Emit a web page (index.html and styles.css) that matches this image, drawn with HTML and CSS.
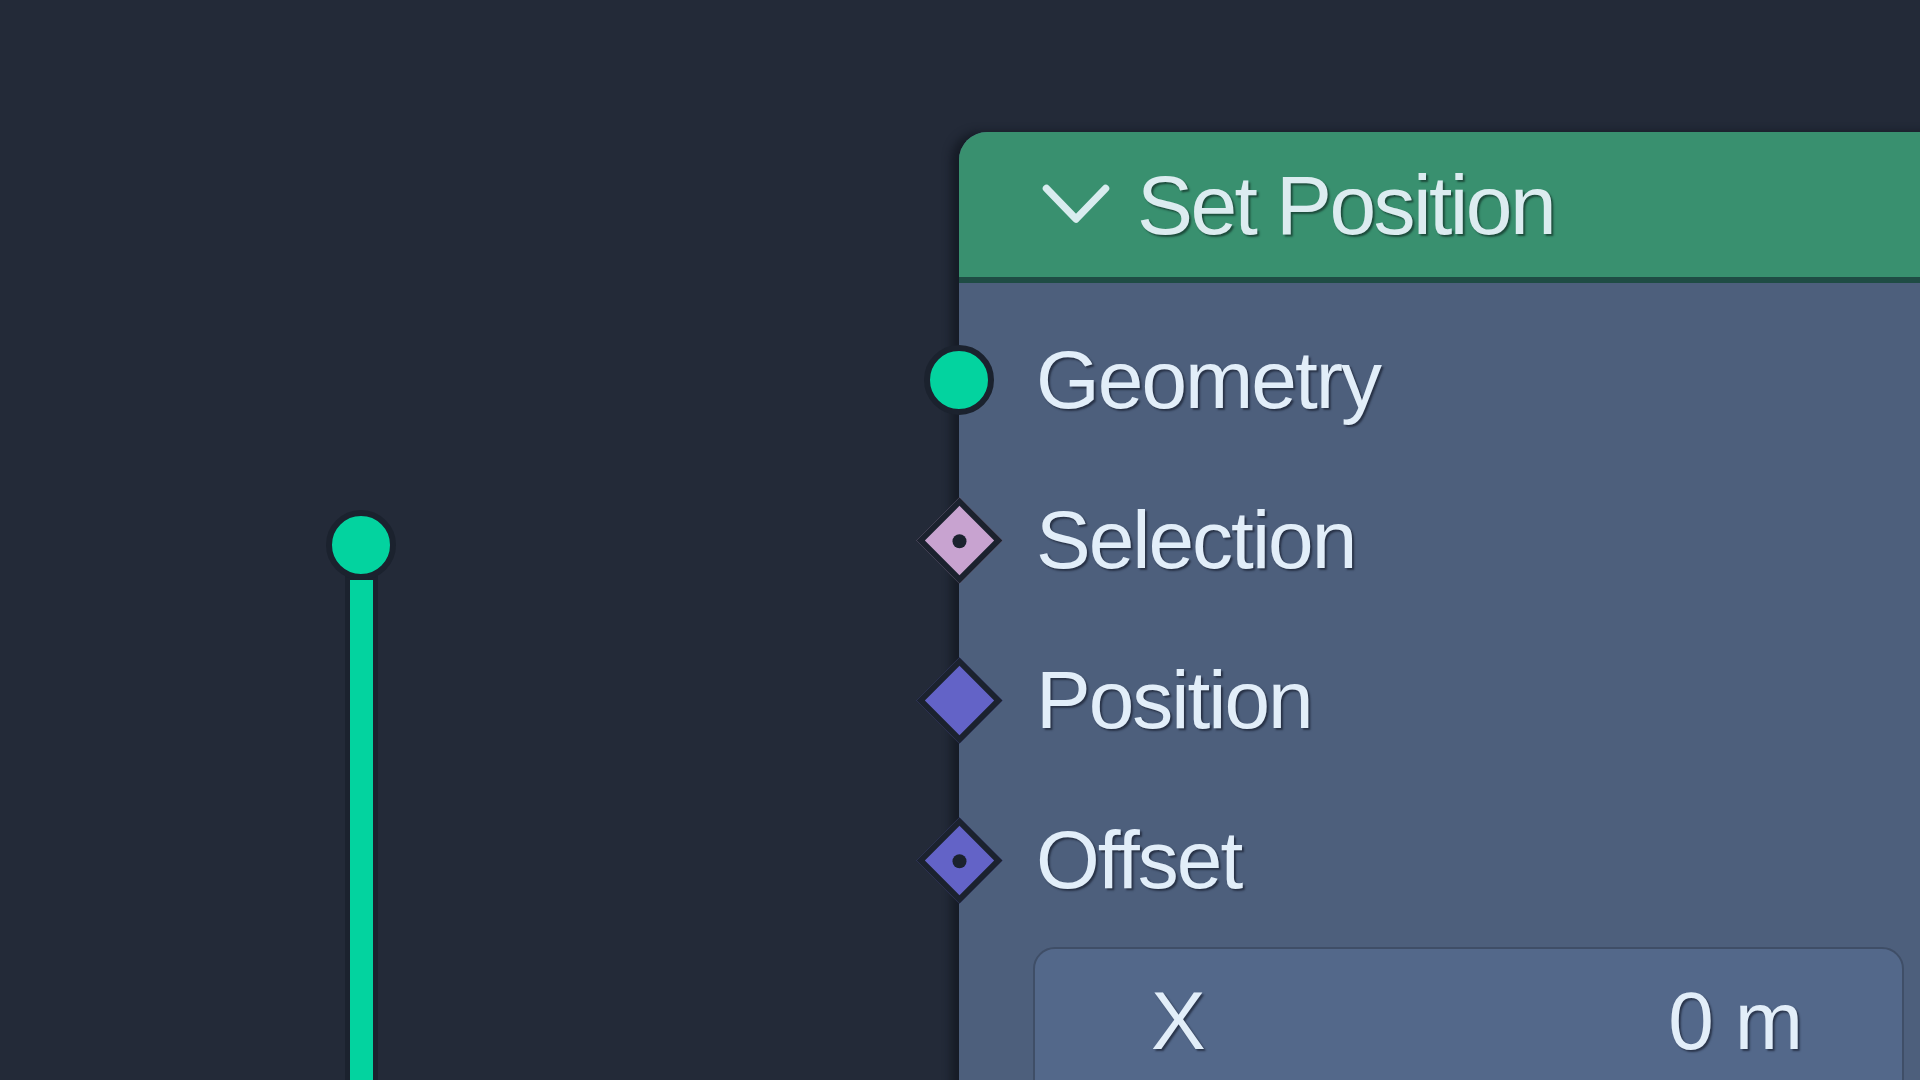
FILE: index.html
```html
<!DOCTYPE html>
<html lang="en">
<head>
<meta charset="utf-8">
<title>Set Position</title>
<link rel="stylesheet" href="styles.css">
</head>
<body>
<main class="canvas">
  <div class="wire">
    <span class="wire-dot"></span>
    <span class="wire-line"></span>
  </div>

  <section class="node">
    <header class="node-head">
      <svg class="chevron" viewBox="0 0 68 40" width="68" height="40" aria-hidden="true">
        <path d="M4.5 4.5 L34 35 L63.5 4.5" fill="none" stroke="#d9ecef" stroke-width="7.5" stroke-linecap="round" stroke-linejoin="round"/>
      </svg>
      <h1 class="node-title">Set Position</h1>
    </header>
    <div class="node-body">
      <div class="row">
        <span class="socket"><span class="sock-circle"></span></span>
        <span class="label">Geometry</span>
      </div>
      <div class="row">
        <span class="socket"><span class="sock-diamond pink"><span class="dot"></span></span></span>
        <span class="label">Selection</span>
      </div>
      <div class="row">
        <span class="socket"><span class="sock-diamond violet"></span></span>
        <span class="label">Position</span>
      </div>
      <div class="row">
        <span class="socket"><span class="sock-diamond violet"><span class="dot"></span></span></span>
        <span class="label">Offset</span>
      </div>
      <div class="field">
        <span class="field-name">X</span>
        <span class="field-value">0 m</span>
      </div>
    </div>
  </section>
</main>
</body>
</html>
```

FILE: styles.css
```css
html, body {
  margin: 0;
  padding: 0;
}
body {
  width: 1920px;
  height: 1080px;
  overflow: hidden;
  background: #232a38;
  font-family: "Liberation Sans", Arial, sans-serif;
  color: #e2eef9;
}
.canvas {
  position: relative;
  width: 1920px;
  height: 1080px;
}

/* wire on the left */
.wire {
  position: absolute;
  left: 326px;
  top: 510px;
  width: 70px;
  display: flex;
  flex-direction: column;
  align-items: center;
}
.wire-dot {
  width: 58px;
  height: 58px;
  border-radius: 50%;
  background: #03d39f;
  border: 6px solid #1b222e;
  position: relative;
  z-index: 1;
}
.wire-line {
  width: 23px;
  height: 520px;
  margin-top: -6px;
  background: #03d39f;
  border: 5px solid #1b222e;
  border-top: 6px solid #1b222e;
}

/* node */
.node {
  position: absolute;
  left: 959px;
  top: 132px;
  width: 1100px;
  height: 1000px;
  border-radius: 28px 0 0 0;
  box-shadow: -8px 0 8px rgba(14, 18, 26, 0.6);
  background: #4d5f7c;
}
.node-head {
  height: 145px;
  background: #39906f;
  border-radius: 28px 0 0 0;
  border-bottom: 6px solid #1f4c44;
  display: flex;
  align-items: center;
  padding-left: 83px;
}
.chevron {
  display: block;
  margin-top: -2px;
}
.node-title {
  margin: 0 0 0 27px;
  font-weight: 400;
  font-size: 84px;
  letter-spacing: -2.6px;
  line-height: 1;
  color: #dcecf0;
  text-shadow: 2px 2px 2px rgba(10, 30, 25, 0.6);
}

.node-body {
  padding-top: 17px;
  display: flex;
  flex-direction: column;
}
.row {
  height: 160px;
  display: flex;
  align-items: center;
}
.socket {
  width: 72px;
  height: 72px;
  margin-left: -36px;
  display: flex;
  align-items: center;
  justify-content: center;
  flex: none;
}
.sock-circle {
  box-sizing: border-box;
  width: 70px;
  height: 70px;
  border-radius: 50%;
  background: #03d39f;
  border: 6px solid #1b222e;
}
.sock-diamond {
  box-sizing: border-box;
  width: 61px;
  height: 61px;
  border: 6px solid #1b222e;
  transform: rotate(45deg);
  display: flex;
  align-items: center;
  justify-content: center;
}
.sock-diamond.pink { background: #c8a3d0; }
.sock-diamond.violet { background: #6363c7; }
.dot {
  width: 14px;
  height: 14px;
  border-radius: 50%;
  background: #1b222e;
}
.label {
  margin-left: 41px;
  font-size: 82px;
  letter-spacing: -2px;
  line-height: 1;
  color: #e2eef9;
  text-shadow: 2px 2px 2px rgba(15, 20, 35, 0.6);
}

.field {
  margin: 7px 0 0 74px;
  width: 871px;
  height: 160px;
  box-sizing: border-box;
  background: #53688a;
  border: 2px solid #3f4e67;
  border-radius: 22px;
  display: flex;
  justify-content: space-between;
  align-items: flex-start;
  padding: 31px 100px 0 116px;
  font-size: 82px;
  line-height: 1;
  color: #e2eef9;
  text-shadow: 2px 2px 2px rgba(15, 20, 35, 0.6);
}
.field-name, .field-value {
  letter-spacing: -1px;
}
```
